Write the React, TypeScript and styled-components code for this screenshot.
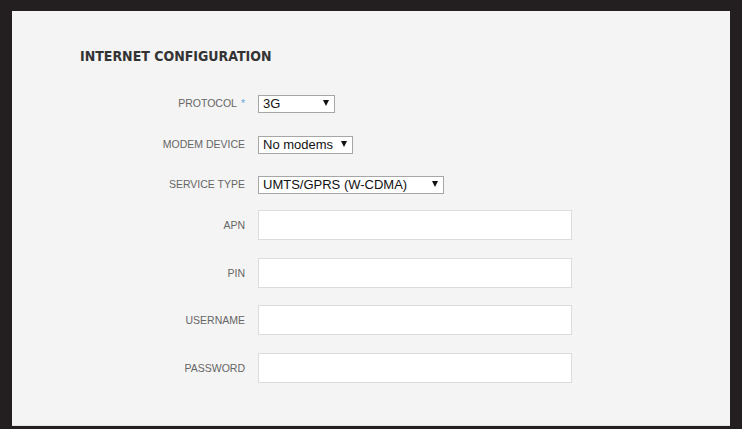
import React from "react";
import styled, { createGlobalStyle } from "styled-components";

const Global = createGlobalStyle`
  html, body { margin: 0; padding: 0; background: #231f20; }
  body { width: 742px; height: 429px; overflow: hidden; }
  * { box-sizing: border-box; }
`;

const Page = styled.div`
  padding: 11px 12px 0 12px;
  height: 429px;
`;

const Panel = styled.section`
  background: #f4f4f4;
  height: 415px;
  padding: 37px 68px 0 68px;
  border-bottom: 1px solid #e2e2e2;
`;

const Title = styled.h2`
  margin: 0 0 30px 0;
  font-family: "DejaVu Sans", sans-serif;
  font-stretch: condensed;
  font-weight: bold;
  font-size: 14px;
  line-height: 16px;
  color: #333;
`;

const Form = styled.div`
  display: flex;
  flex-direction: column;
`;

const Row = styled.div<{ $h: number; $mt: number }>`
  display: grid;
  grid-template-columns: 165px auto;
  column-gap: 13px;
  align-items: center;
  height: ${(p) => p.$h}px;
  margin-top: ${(p) => p.$mt}px;
`;

const Label = styled.label`
  text-align: right;
  font-family: "Liberation Sans", Arial, sans-serif;
  font-size: 10.5px;
  color: #666;
  text-transform: uppercase;
  white-space: nowrap;
`;

const Req = styled.span`
  color: #6aa8dc;
  margin-left: 4px;
`;

const SelectWrap = styled.div<{ $w: number }>`
  position: relative;
  width: ${(p) => p.$w}px;
  height: 18px;
`;

const Select = styled.select`
  appearance: none;
  -webkit-appearance: none;
  width: 100%;
  height: 18px;
  margin: 0;
  padding: 0 0 0 4px;
  border: 1px solid #a6a6a6;
  border-radius: 0;
  background: #fff;
  font-family: "Liberation Sans", Arial, sans-serif;
  font-size: 13px;
  line-height: 16px;
  color: #111;
  outline: none;
`;

const Arrow = styled.span`
  position: absolute;
  right: 6px;
  top: 6px;
  width: 0;
  height: 0;
  border-left: 3.5px solid transparent;
  border-right: 3.5px solid transparent;
  border-top: 6px solid #111;
  pointer-events: none;
`;

const Input = styled.input`
  width: 314px;
  height: 30px;
  margin: 0;
  border: 1px solid #dcdcdc;
  background: #fff;
  font-family: "Liberation Sans", Arial, sans-serif;
  font-size: 13px;
  padding: 0 6px;
  outline: none;
`;

const selects = [
  { label: "Protocol", value: "3G", w: 77, req: true, mt: 0 },
  { label: "Modem device", value: "No modems", w: 95, req: false, mt: 22.5 },
  { label: "Service type", value: "UMTS/GPRS (W-CDMA)", w: 186, req: false, mt: 22.5 },
];

const inputs = [
  { label: "APN", mt: 17 },
  { label: "PIN", mt: 17.5 },
  { label: "Username", mt: 17.5 },
  { label: "Password", mt: 17.5 },
];

export default function App() {
  return (
    <>
      <Global />
      <Page>
        <Panel>
          <Title>INTERNET CONFIGURATION</Title>
          <Form>
            {selects.map((s) => (
              <Row key={s.label} $h={18} $mt={s.mt}>
                <Label>
                  {s.label}
                  {s.req && <Req>*</Req>}
                </Label>
                <SelectWrap $w={s.w}>
                  <Select defaultValue={s.value}>
                    <option>{s.value}</option>
                  </Select>
                  <Arrow />
                </SelectWrap>
              </Row>
            ))}
            {inputs.map((r) => (
              <Row key={r.label} $h={30} $mt={r.mt}>
                <Label>{r.label}</Label>
                <Input type={r.label === "Password" ? "password" : "text"} />
              </Row>
            ))}
          </Form>
        </Panel>
      </Page>
    </>
  );
}
